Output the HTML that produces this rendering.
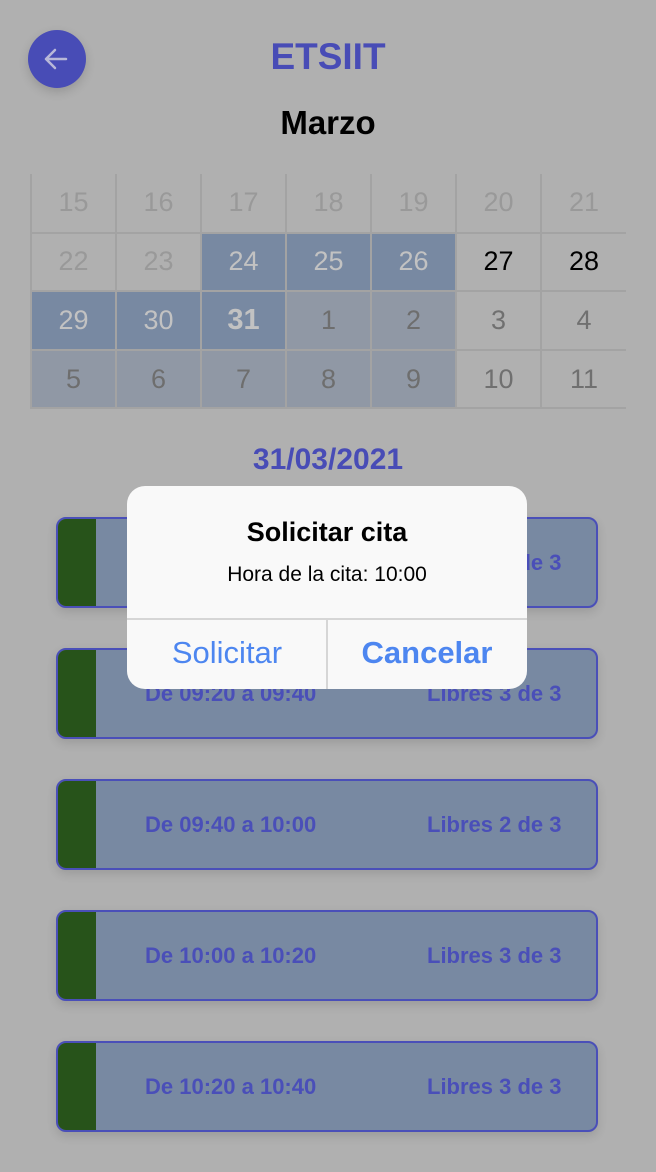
<!DOCTYPE html>
<html><head><meta charset="utf-8"><style>
*{margin:0;padding:0;box-sizing:border-box}
body{width:656px;height:1172px;background:#b0b0b0;font-family:"Liberation Sans",sans-serif;position:relative;overflow:hidden}
.abs{position:absolute}
.back{left:28px;top:30px;width:58px;height:58px;border-radius:50%;background:#484cb6;box-shadow:0 4px 10px rgba(0,0,0,.15)}
.t{left:0;width:656px;text-align:center;font-weight:bold}
table{position:absolute;left:30px;top:174px;border-collapse:collapse}
td{width:85px;height:58.6px;text-align:center;font-size:27px;color:#999;border:2px solid #a3a3a3;border-top:none}
td:first-child{border-left:2px solid #a3a3a3}
td:last-child{border-right:none}
.s{background:#7889a2;color:#c2c2c2}
.l{background:#9098a5;color:#6e6e6e}
.k{color:#000}.g{color:#707070}
.card{left:56px;width:542px;height:91px;border:2.5px solid #4a4fb8;border-radius:10px;background:#7889a2;overflow:hidden;box-shadow:0 4px 10px rgba(0,0,0,.12)}
.card .bar{position:absolute;left:-3px;top:-3px;bottom:-3px;width:41px;background:#27531a}
.card span{position:absolute;top:31px;font-size:22px;font-weight:bold;color:#4a4fb8}
.dlg{left:127px;top:486px;width:400px;height:203px;background:#f9f9f9;border-radius:18px;overflow:hidden}
</style></head><body>
<div class="abs back"><svg width="58" height="58" viewBox="0 0 58 58"><path d="M38 29H18M27 20l-9 9 9 9" stroke="#b8b8d8" stroke-width="2.5" fill="none" stroke-linecap="round" stroke-linejoin="round"/></svg></div>
<div class="abs t" style="top:36px;font-size:37px;color:#484cb6">ETSIIT</div>
<div class="abs t" style="top:104px;font-size:33px;color:#000">Marzo</div>
<table>
<tr><td>15</td><td>16</td><td>17</td><td>18</td><td>19</td><td>20</td><td>21</td></tr>
<tr><td>22</td><td>23</td><td class="s">24</td><td class="s">25</td><td class="s">26</td><td class="k">27</td><td class="k">28</td></tr>
<tr><td class="s">29</td><td class="s">30</td><td class="s" style="font-weight:bold;font-size:29px">31</td><td class="l">1</td><td class="l">2</td><td class="g">3</td><td class="g">4</td></tr>
<tr><td class="l">5</td><td class="l">6</td><td class="l">7</td><td class="l">8</td><td class="l">9</td><td class="g">10</td><td class="g">11</td></tr>
</table>
<div class="abs t" style="top:443px;font-size:30px;color:#484cb6">31/03/2021</div>
<div class="abs card" style="top:517px"><div class="bar"></div><span style="left:87px">De 09:00 a 09:20</span><span style="left:369px">Libres 3 de 3</span></div>
<div class="abs card" style="top:648px"><div class="bar"></div><span style="left:87px">De 09:20 a 09:40</span><span style="left:369px">Libres 3 de 3</span></div>
<div class="abs card" style="top:779px"><div class="bar"></div><span style="left:87px">De 09:40 a 10:00</span><span style="left:369px">Libres 2 de 3</span></div>
<div class="abs card" style="top:910px"><div class="bar"></div><span style="left:87px">De 10:00 a 10:20</span><span style="left:369px">Libres 3 de 3</span></div>
<div class="abs card" style="top:1041px"><div class="bar"></div><span style="left:87px">De 10:20 a 10:40</span><span style="left:369px">Libres 3 de 3</span></div>
<div class="abs dlg">
<div class="abs" style="left:0;width:400px;top:31px;text-align:center;font-size:27px;font-weight:bold;color:#000">Solicitar cita</div>
<div class="abs" style="left:0;width:400px;top:77px;text-align:center;font-size:21px;color:#000">Hora de la cita: 10:00</div>
<div class="abs" style="left:0;top:132px;width:400px;height:2px;background:#d6d6d6"></div>
<div class="abs" style="left:199px;top:133px;width:2px;height:70px;background:#d6d6d6"></div>
<div class="abs" style="left:0;width:200px;top:149px;text-align:center;font-size:31px;color:#4d86f0">Solicitar</div>
<div class="abs" style="left:200px;width:200px;top:149px;text-align:center;font-size:31px;font-weight:bold;color:#4d86f0">Cancelar</div>
</div>
</body></html>
